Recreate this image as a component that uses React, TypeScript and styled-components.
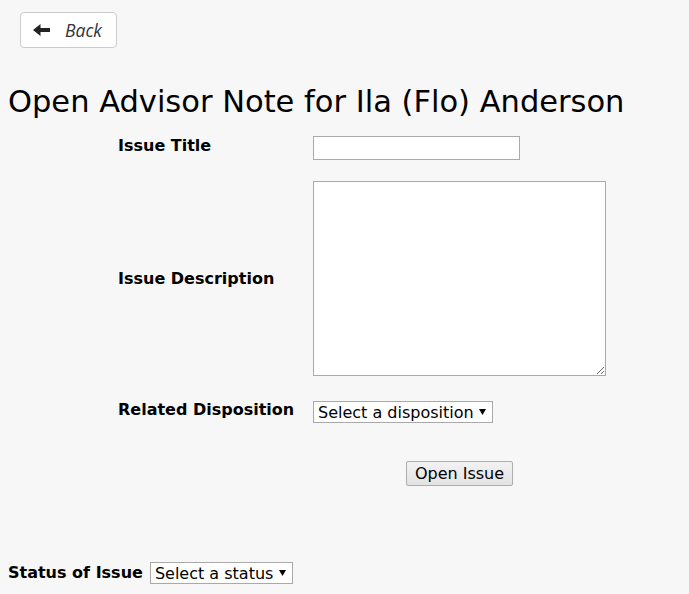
import * as React from "react";
import styled, { createGlobalStyle } from "styled-components";

const GlobalStyle = createGlobalStyle`
  body {
    margin: 8px;
    background: #f7f7f7;
    font-family: "DejaVu Sans", Verdana, sans-serif;
    color: #000;
  }
`;

const caret =
  "url(\"data:image/svg+xml;utf8,<svg xmlns='http://www.w3.org/2000/svg' width='7' height='6'><polygon points='0,0 7,0 3.5,6' fill='black'/></svg>\")";

const BackButton = styled.button`
  display: inline-flex;
  align-items: center;
  gap: 15px;
  margin: 4px 0 0 12px;
  height: 36px;
  padding: 0 14px 0 12px;
  background: #fff;
  border: 1px solid #ccc;
  border-radius: 4px;
  font-family: "Open Sans", "DejaVu Sans", sans-serif;
  font-size: 17.5px;
  font-style: italic;
  color: #333;
  cursor: pointer;
`;

const Title = styled.h1`
  margin: 36px 0 16px;
  font-size: 30.5px;
  font-weight: normal;
  line-height: 36px;
`;

const Form = styled.div`
  display: grid;
  grid-template-columns: 195px 293px;
  margin-left: 110px;
  row-gap: 21px;
`;

const Label = styled.label`
  align-self: center;
  font-weight: bold;
  font-size: 16px;
  line-height: 20px;
  font-family: "DejaVu Sans", Verdana, sans-serif;
`;

const TopLabel = styled(Label)<{ $offset?: number }>`
  align-self: start;
  padding-top: ${(p) => p.$offset ?? 0}px;
`;

const TextInput = styled.input`
  width: 207px;
  height: 24px;
  box-sizing: border-box;
  border: 1px solid #a9a9a9;
  background: #fff;
`;

const TextArea = styled.textarea`
  display: block;
  width: 293px;
  height: 195px;
  box-sizing: border-box;
  border: 1px solid #a9a9a9;
  background: #fff;
`;

const SelectCell = styled.div`
  padding-top: 4px;
`;

const Select = styled.select<{ $width: number }>`
  appearance: none;
  width: ${(p) => p.$width}px;
  height: 22px;
  box-sizing: border-box;
  border: 1px solid #a9a9a9;
  border-radius: 0;
  background: #fff ${caret} no-repeat right 6px center;
  font-family: "DejaVu Sans", Verdana, sans-serif;
  font-size: 16px;
  color: #000;
  padding: 0 4px;
`;

const ButtonCell = styled.div`
  grid-column: 2;
  display: flex;
  justify-content: center;
  padding-top: 17px;
`;

const SubmitButton = styled.button`
  height: 25px;
  width: 107px;
  padding: 0;
  border: 1px solid #adadad;
  border-radius: 2px;
  background: linear-gradient(#f2f2f2, #e3e3e3);
  font-family: "DejaVu Sans", Verdana, sans-serif;
  font-size: 16px;
  color: #000;
`;

const StatusRow = styled.div`
  display: flex;
  align-items: center;
  gap: 7px;
  margin-top: 76px;
`;

const ArrowIcon = () => (
  <svg width="17" height="12" viewBox="0 0 17 12" aria-hidden>
    <polygon fill="#222" points="0,6 7.5,0 7.5,4 17,4 17,8 7.5,8 7.5,12" />
  </svg>
);

export default function App() {
  return (
    <>
      <GlobalStyle />
      <BackButton>
        <ArrowIcon />
        Back
      </BackButton>
      <Title>Open Advisor Note for Ila (Flo) Anderson</Title>
      <Form>
        <TopLabel>Issue Title</TopLabel>
        <TextInput type="text" />
        <Label>Issue Description</Label>
        <TextArea />
        <TopLabel $offset={3}>Related Disposition</TopLabel>
        <SelectCell>
          <Select $width={180} defaultValue="">
            <option value="">Select a disposition</option>
          </Select>
        </SelectCell>
        <ButtonCell>
          <SubmitButton>Open Issue</SubmitButton>
        </ButtonCell>
      </Form>
      <StatusRow>
        <Label>Status of Issue</Label>
        <Select $width={143} defaultValue="">
          <option value="">Select a status</option>
        </Select>
      </StatusRow>
    </>
  );
}
